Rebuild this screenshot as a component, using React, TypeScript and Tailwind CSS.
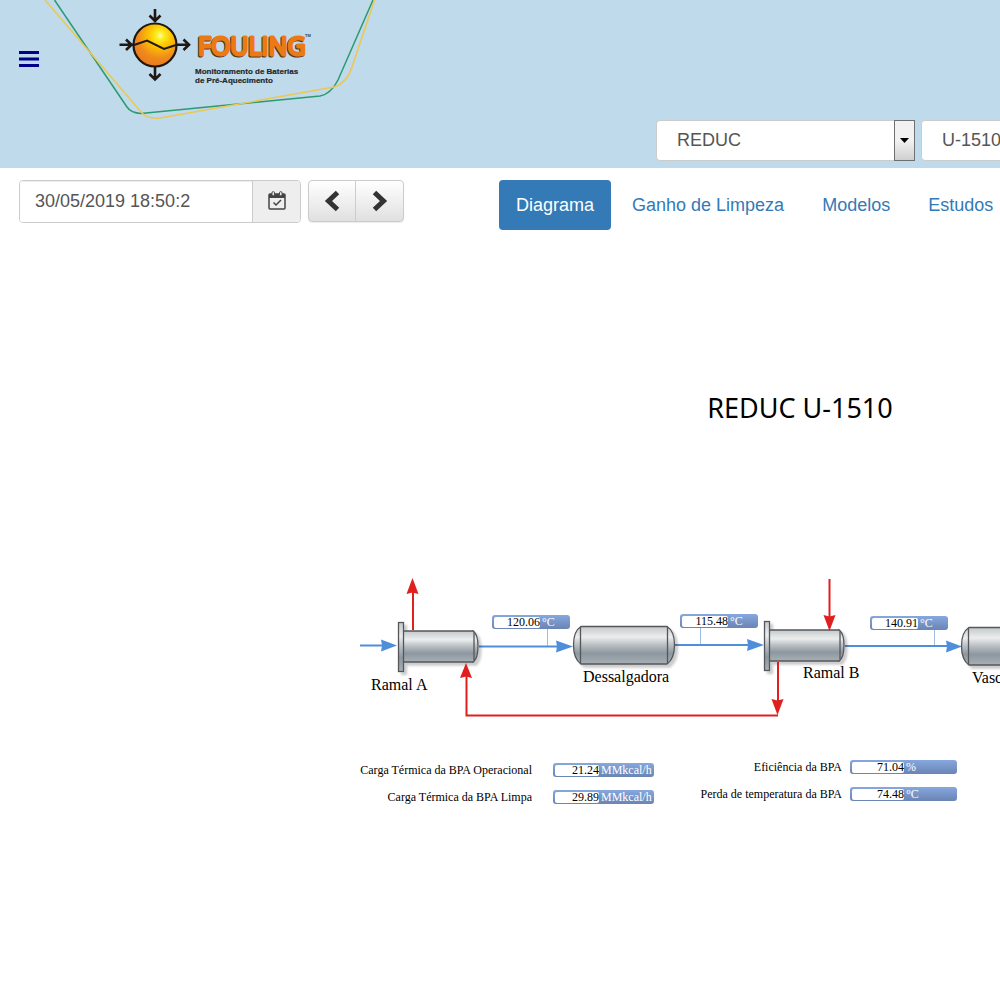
import { useState } from "react";

const sans = "font-['Liberation_Sans',Arial,sans-serif]";
const serif = "font-['Liberation_Serif','Times_New_Roman',serif]";

function Logo() {
  return (
    <svg viewBox="40 0 340 125" className="h-[125px] w-[340px] shrink-0" role="img" aria-label="Fouling">
      <defs>
        <radialGradient id="sun" cx="0.62" cy="0.28" r="0.75">
          <stop offset="0" stopColor="#fffbc0" />
          <stop offset="0.12" stopColor="#ffee20" />
          <stop offset="0.35" stopColor="#fdc400" />
          <stop offset="0.7" stopColor="#f08a1c" />
          <stop offset="1" stopColor="#e8791c" />
        </radialGradient>
      </defs>
      <path d="M54.500 0 L127 107 Q131 113 141 113.500 L320 96 Q331 94 338 80 L373 0" fill="none" stroke="#2b9a70" strokeWidth="1.500" />
      <path d="M45 0 L142 113 Q147 119 160 118 L334 87 Q347 83 352 67 L374.500 0" fill="none" stroke="#ecc752" strokeWidth="1.500" />
      <circle cx="155" cy="45" r="21.500" fill="url(#sun)" stroke="#1f1714" strokeWidth="2.200" />
      <path d="M134 45 L147 40.500 L164 49 L176 45" fill="none" stroke="#1f1714" strokeWidth="2" />
      <g fill="none" stroke="#1f1714" strokeWidth="2.600">
        <path d="M155 9 V22 M149.500 15.500 L155 21 L160.500 15.500" />
        <path d="M155 67 V80 M149.500 74 L155 79.500 L160.500 74" />
        <path d="M119.500 44.700 H133 M126 39.500 L131.500 44.700 L126 50" />
        <path d="M176 44.700 H189 M183.500 39.500 L189 44.700 L183.500 50" />
      </g>
      <g fontFamily="'Liberation Sans Narrow', 'Open Sans', sans-serif" fontSize="25" strokeLinejoin="round" strokeLinecap="round">
        <text x="197" y="55.500" fill="#4a382c" stroke="#4a382c" strokeWidth="3">FOULING</text>
        <text x="198" y="54.500" fill="#ec7a14" stroke="#ec7a14" strokeWidth="3">FOULING</text>
      </g>
      <text x="305" y="37" fontFamily="Liberation Sans, sans-serif" fontWeight="bold" fontSize="4" fill="#3c3c3c">TM</text>
      <g fontFamily="Liberation Sans, sans-serif" fontWeight="bold" fontSize="8" fill="#26282b" stroke="#26282b" strokeWidth="0.200">
        <text x="195" y="73.500">Monitoramento de Baterias</text>
        <text x="195" y="82.500">de Pré-Aquecimento</text>
      </g>
    </svg>
  );
}

function HeaderSelect({ label, options }: { label: string; options: string[] }) {
  return (
    <div className="relative h-[41px] w-[259px] shrink-0">
      <select
        aria-label={label}
        className="h-full w-full appearance-none rounded border border-[#ccc] bg-white pb-0.5 pl-5 pr-6 text-lg leading-6 text-[#555]"
      >
        {options.map((o) => (
          <option key={o}>{o}</option>
        ))}
      </select>
      <span className="pointer-events-none absolute inset-y-0 right-0 flex w-[21px] items-center justify-center border border-[#707070] bg-linear-to-b from-[#f2f2f2] from-50% to-[#cfcfcf]">
        <svg viewBox="0 0 9 5" className="h-[5px] w-[9px]">
          <path d="M0 0 H9 L4.500 5 Z" fill="#000" />
        </svg>
      </span>
    </div>
  );
}

function CalendarIcon() {
  return (
    <svg viewBox="0 0 18 19" className="h-[19px] w-[18px]" fill="none" stroke="#444">
      <rect x="1" y="3" width="16" height="15" rx="1" strokeWidth="1.500" />
      <path d="M1 3 H17 V7 H1 Z" fill="#444" stroke="none" />
      <rect x="4" y="0.700" width="2.500" height="4" rx="1" fill="#eee" strokeWidth="1" />
      <rect x="11.500" y="0.700" width="2.500" height="4" rx="1" fill="#eee" strokeWidth="1" />
      <path d="M5.500 11.500 L8 14 L13 9" strokeWidth="1.500" />
    </svg>
  );
}

function Chevron({ left }: { left?: boolean }) {
  return (
    <svg viewBox="0 0 16 22" className="h-[22px] w-4">
      <path d={left ? "M13.500 2.500 L4.500 11 L13.500 19.500" : "M2.500 2.500 L11.500 11 L2.500 19.500"} fill="none" stroke="#333" strokeWidth="5" />
    </svg>
  );
}

const tabs = ["Diagrama", "Ganho de Limpeza", "Modelos", "Estudos"];

function Toolbar() {
  const [active, setActive] = useState("Diagrama");
  const [date, setDate] = useState("30/05/2019 18:50:2");
  const step = "flex h-full w-[47px] items-center justify-center";
  return (
    <div className="flex items-start pl-[19px] pt-3">
      <div className="flex h-[43px] w-[282px] shrink-0 overflow-hidden rounded border border-[#ccc]">
        <input
          aria-label="Data"
          value={date}
          onChange={(e) => setDate(e.target.value)}
          className="min-w-0 flex-1 bg-white px-[15px] pb-0.5 text-lg leading-6 text-[#555] shadow-[inset_0_1px_1px_rgba(0,0,0,0.075)] outline-none"
        />
        <button aria-label="Abrir calendário" className="flex w-12 items-center justify-center border-l border-[#ccc] bg-[#eee] pb-0.5">
          <CalendarIcon />
        </button>
      </div>
      <div className="ml-[7px] flex h-[42px] shrink-0 rounded border border-[#ccc] bg-linear-to-b from-white to-[#e0e0e0] shadow-[0_1px_1px_rgba(0,0,0,0.08)]">
        <button aria-label="Anterior" className={step + " border-r border-[#ccc]"}>
          <Chevron left />
        </button>
        <button aria-label="Próximo" className={step}>
          <Chevron />
        </button>
      </div>
      <nav className="ml-[95px] flex shrink-0 gap-1">
        {tabs.map((t) => (
          <a
            key={t}
            href="#"
            onClick={(e) => {
              e.preventDefault();
              setActive(t);
            }}
            className={
              "whitespace-nowrap rounded px-[17px] py-[13px] text-lg leading-6 " +
              (t === active ? "bg-[#337ab7] text-white" : "text-[#337ab7]")
            }
          >
            {t}
          </a>
        ))}
      </nav>
    </div>
  );
}

function Exchanger({ x, y }: { x: number; y: number }) {
  return (
    <g transform={`translate(${x} ${y})`} stroke="#54575a" strokeWidth="1.300" filter="url(#soft)">
      <path d="M75 9 Q80 12 80 24.500 Q80 37 75 40 Z" fill="url(#steel)" />
      <rect x="5" y="9" width="71" height="31" rx="1" fill="url(#steel)" />
      <rect x="0.500" y="0.500" width="5" height="49" fill="url(#steel)" />
    </g>
  );
}

function Drum({ x, y }: { x: number; y: number }) {
  return (
    <g transform={`translate(${x} ${y})`} stroke="#54575a" strokeWidth="1.300" filter="url(#soft)">
      <path d="M8 0.500 H94 Q101.500 5 101.500 19 Q101.500 33 94 38 H8 Q0.500 33 0.500 19 Q0.500 5 8 0.500 Z" fill="url(#steel)" />
      <path d="M7.500 0.500 V38 M94.500 0.500 V38" />
    </g>
  );
}

function Process() {
  return (
    <svg viewBox="355 570 885 160" className="h-full w-full">
      <defs>
        <linearGradient id="steel" x1="0" y1="0" x2="0" y2="1">
          <stop offset="0" stopColor="#c4c8ca" />
          <stop offset="0.280" stopColor="#eceeee" />
          <stop offset="0.500" stopColor="#b8bdc1" />
          <stop offset="0.720" stopColor="#8d979f" />
          <stop offset="1" stopColor="#a9b0b6" />
        </linearGradient>
        <filter id="soft" x="-10%" y="-10%" width="125%" height="130%">
          <feDropShadow dx="3" dy="3" stdDeviation="1" floodColor="#000" floodOpacity="0.2" />
        </filter>
      </defs>
      <g fill="none" stroke="#9dbde6" strokeWidth="1">
        <path d="M547.500 629 V646 M700.500 628 V645 M934.500 630 V645" />
      </g>
      <g fill="none" stroke="#4f8ed8" strokeWidth="2">
        <path d="M360 645.500 H385 M479 646.500 H558 M675 645 H750 M845 646 H948" />
      </g>
      <g fill="#4f8ed8">
        <path d="M381 639.500 L397 645.500 L381 651.500 L382 645.500 Z" />
        <path d="M556 640.500 L573 646.500 L556 652.500 L557 646.500 Z" />
        <path d="M747 639 L764 645 L747 651 L748 645 Z" />
        <path d="M946 640.500 L962 646.500 L946 652.500 L947 646.500 Z" />
      </g>
      <Exchanger x={398} y={622} />
      <Exchanger x={764} y={621} />
      <Drum x={573} y={626} />
      <Drum x={961} y={627} />
      <g fill="none" stroke="#e01f1f" strokeWidth="2">
        <path d="M413 630 V590" />
        <path d="M829.500 579 V618" />
        <path d="M778 662 V702" />
        <path d="M466.500 676 V715.500 H778" />
      </g>
      <g fill="#e01f1f">
        <path d="M412.500 578 L418.500 594 L412.500 592.500 L406.500 594 Z" />
        <path d="M829.500 631 L823.500 615 L829.500 616.500 L835.500 615 Z" />
        <path d="M777.500 715 L771.500 699 L777.500 700.500 L783.500 699 Z" />
        <path d="M466 663 L472 678 L466 676.500 L460 678 Z" />
      </g>
    </svg>
  );
}

function Tag({ value, unit, field, className }: { value: string; unit: string; field: string; className: string }) {
  return (
    <div
      className={
        "flex h-[14px] items-center rounded-[3px] bg-linear-to-b from-[#86a8de] to-[#6a84b4] pl-0.5 text-xs leading-3 " + className
      }
    >
      <span className={"h-[11px] shrink-0 rounded-[2px] bg-white text-right leading-[11px] text-black " + field}>{value}</span>
      <span className="whitespace-nowrap pl-0.5 text-white">{unit}</span>
    </div>
  );
}

const tags = [
  { value: "120.06", unit: "°C", place: "left-[137px] top-[45px]" },
  { value: "115.48", unit: "°C", place: "left-[325px] top-[44px]" },
  { value: "140.91", unit: "°C", place: "left-[515px] top-[46px]" },
];

const names = [
  { name: "Ramal A", place: "left-[16px] top-[105px]" },
  { name: "Dessalgadora", place: "left-[228px] top-[97px]" },
  { name: "Ramal B", place: "left-[448px] top-[93px]" },
  { name: "Vaso", place: "left-[617px] top-[98px]" },
];

const heat = [
  { label: "Carga Térmica da BPA Operacional", value: "21.24", unit: "MMkcal/h" },
  { label: "Carga Térmica da BPA Limpa", value: "29.89", unit: "MMkcal/h" },
];

const performance = [
  { label: "Eficiência da BPA", value: "71.04", unit: "%" },
  { label: "Perda de temperatura da BPA", value: "74.48", unit: "°C" },
];

export default function App() {
  return (
    <div className={"min-h-screen overflow-hidden bg-white " + sans}>
      <header className="flex items-start bg-[#bfdaea] pb-[7px]">
        <button aria-label="Menu" className="ml-[19px] mt-[50px] w-[21px] shrink-0">
          <svg viewBox="0 0 21 18" className="h-[18px] w-[21px]" fill="#00008b">
            <path d="M0 1 H20 V4 H0 Z M0 7.500 H20 V10.500 H0 Z M0 14 H20 V17 H0 Z" />
          </svg>
        </button>
        <Logo />
        <div className="ml-[276px] mt-[120px] flex shrink-0 gap-1.5">
          <HeaderSelect label="Refinaria" options={["REDUC"]} />
          <HeaderSelect label="Unidade" options={["U-1510"]} />
        </div>
      </header>

      <Toolbar />

      <main className={"ml-[355px] w-[885px] pt-[159px] " + serif}>
        <h1 className="pl-[5px] text-center font-['Noto_Sans',sans-serif] text-[27px] leading-[38px] text-black">REDUC U-1510</h1>
        <div className="relative mt-[143px] h-[160px]">
          <Process />
          {tags.map((t) => (
            <Tag key={t.value} value={t.value} unit={t.unit} field="w-[46px]" className={"absolute w-[78px] " + t.place} />
          ))}
          {names.map((n) => (
            <span key={n.name} className={"absolute whitespace-nowrap text-base leading-5 text-black " + n.place}>
              {n.name}
            </span>
          ))}
        </div>
        <div className="flex gap-[46px] pl-[5px] pt-[30px] text-xs leading-[14px] text-black">
          <dl className="grid grid-cols-[172px_101px] content-start gap-x-[21px] gap-y-[13px] pt-[3px]">
            {heat.map((m) => (
              <div key={m.label} className="contents">
                <dt className="whitespace-nowrap text-right">{m.label}</dt>
                <dd>
                  <Tag value={m.value} unit={m.unit} field="w-[44px]" className="w-full" />
                </dd>
              </div>
            ))}
          </dl>
          <dl className="grid grid-cols-[142px_107px] content-start gap-x-2 gap-y-[13px]">
            {performance.map((m) => (
              <div key={m.label} className="contents">
                <dt className="whitespace-nowrap text-right">{m.label}</dt>
                <dd>
                  <Tag value={m.value} unit={m.unit} field="w-[52px]" className="w-full" />
                </dd>
              </div>
            ))}
          </dl>
        </div>
      </main>
    </div>
  );
}
